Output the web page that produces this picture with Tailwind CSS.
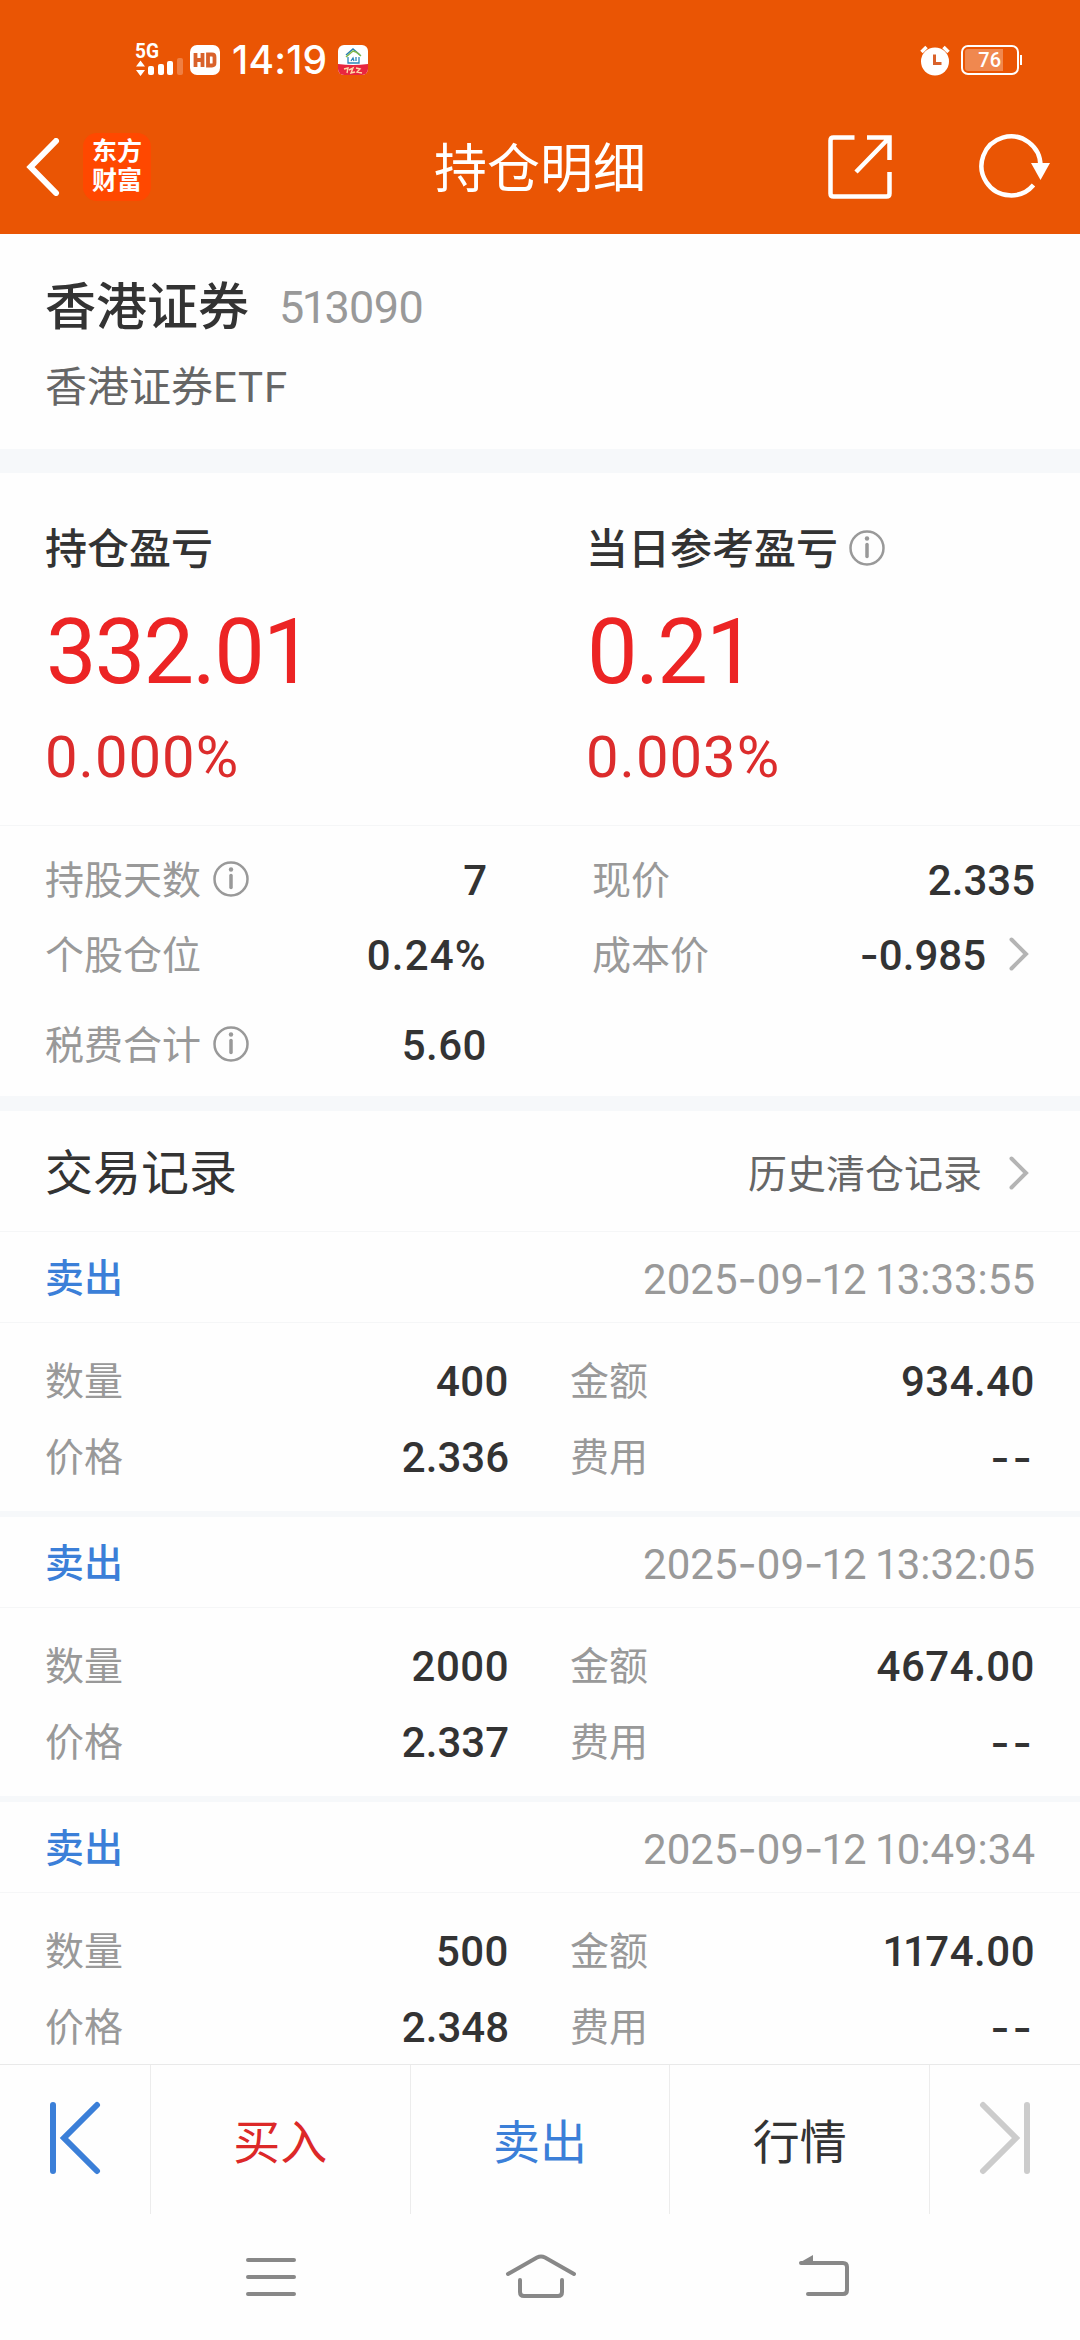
<!doctype html>
<html lang="zh-CN">
  <head>
    <meta charset="utf-8" />
    <meta name="viewport" content="width=device-width, initial-scale=1" />
    <script src="https://cdn.jsdelivr.net/npm/@tailwindcss/browser@4"></script>
    <title>持仓明细</title>
  </head>
  <body
    class="flex flex-col w-[1080px] h-[2340px] overflow-hidden bg-[#fefefe] text-[#333] font-[Roboto,'Noto_Sans_CJK_SC',sans-serif]"
  >
    <header class="h-[234px] shrink-0 bg-[#ea5504] text-white">
      <!-- status bar -->
      <div class="flex items-center h-[120px] pl-[135px] pr-[58px]">
        <svg class="w-[50px] h-[56px] overflow-visible" viewBox="0 -10 50 56" fill="currentColor">
          <text x="0" y="16" font-size="21" font-weight="700" textLength="24" lengthAdjust="spacingAndGlyphs">5G</text>
          <path d="M5.500 18.500l4.500 6h-9zM5.500 34l4.500-6h-9z" />
          <rect x="13" y="24" width="6" height="9" rx="2" />
          <rect x="23" y="22" width="6" height="11" rx="2" />
          <rect x="32" y="19" width="6" height="14" rx="2" />
          <rect x="42" y="16" width="6" height="17" rx="2" opacity="0.25" />
        </svg>
        <div class="flex items-center justify-center w-[30px] h-[30px] ml-[5px] rounded-[7px] bg-white">
          <svg class="w-[24px] h-[16px]" viewBox="0 0 24 16" fill="none" stroke="#d9622b" stroke-width="3.800">
            <path d="M2.500 1v14M9.500 1v14M2.500 8h7M15 2.500h4q2.500 0 2.500 2.500v6q0 2.500-2.500 2.500h-4z" />
          </svg>
        </div>
        <span class="ml-[12px] w-[97px] text-[39px] leading-[40px] tracking-[0.2px] font-medium font-[Inter,sans-serif]">14:19</span>
        <svg class="w-[30px] h-[30px] ml-[9px] rounded-[6px]" viewBox="0 0 30 30" fill="none">
          <path d="M0 0h30v30H0z" fill="#fff" />
          <path d="M0 19q15 2 30 0v11H0z" fill="#e8263f" />
          <path d="M8 10l7-6 7 6" stroke="#2b7fae" stroke-width="1.500" />
          <path d="M8 12l7-6 3 1 5 4" stroke="#7fb848" stroke-width="1.500" />
          <path d="M10 12v6h11v-6M13 16l2-3 1 3M18 12v4" stroke="#2b86b8" stroke-width="1.300" />
          <path d="M6 24l4-1-1 5M11 25l4-2-2 5 4-1M18 23l4 1-3 3 5 1" stroke="#ffd9a8" stroke-width="1.400" />
        </svg>
        <svg class="w-[32px] h-[32px] ml-auto mr-[10px]" viewBox="0 0 32 32">
          <circle cx="16" cy="17.500" r="14" fill="#fff" />
          <path d="M2.500 8l5-5M29.500 8l-5-5" stroke="#fff" stroke-width="3.500" />
          <path d="M15.500 10.500v9h7" fill="none" stroke="#d9622b" stroke-width="3" />
        </svg>
        <div class="flex items-center">
          <div class="flex items-center w-[58px] h-[30px] p-[2px] rounded-[7px] border-2 border-white">
            <div class="w-[38px] h-[22px] rounded-l-[3px] bg-white/30 text-right text-[20px] leading-[22px] font-medium pr-[2px]">76</div>
          </div>
          <div class="w-[2px] h-[10px] ml-[1px] bg-white"></div>
        </div>
      </div>
      <!-- title bar -->
      <div class="relative flex items-center h-[94px] pl-[26px] pr-[27px]">
        <svg class="w-[34px] h-[58px]" viewBox="0 0 34 58" fill="none" stroke="#fff" stroke-width="6">
          <path d="M30 3L4.500 29 30 55" stroke-linecap="round" />
        </svg>
        <div class="flex flex-col items-center justify-center w-[68px] h-[68px] ml-[23px] rounded-[14px] bg-[#ff4800] text-[25px] font-bold">
          <span class="h-[29px] leading-[27px]">东方</span>
          <span class="h-[29px] leading-[27px]">财富</span>
        </div>
        <h1 class="absolute inset-x-0 pt-[6px] text-center text-[53px] leading-[60px]">持仓明细</h1>
        <svg class="w-[64px] h-[64px] ml-auto" viewBox="0 0 64 64" fill="none" stroke="#fff" stroke-width="4.500">
          <path d="M26.500 2.500H5.500q-3 0-3 3v53q0 3 3 3h53q3 0 3-3V37M39 2.500h22.500V25M61 3L28 37" />
        </svg>
        <svg class="w-[74px] h-[66px] ml-[87px]" viewBox="0 0 74 66">
          <path d="M54.500 51A29.500 29.500 0 1 1 61.500 32" fill="none" stroke="#fff" stroke-width="4.500" />
          <path d="M52 29h19L61.500 46z" fill="#fff" />
        </svg>
      </div>
    </header>

    <main class="flex-1 min-h-0 overflow-hidden">
      <section class="h-[215px] pt-[41px] px-[45px]">
        <div class="flex items-center h-[66px]">
          <h2 class="text-[51px] leading-[60px] font-medium">香港证券</h2>
          <span class="ml-[30px] text-[45px] leading-[60px] tracking-[-0.6px] text-[#999]">5<span class="-mx-[2px]">1</span>3090</span>
        </div>
        <p class="flex items-center h-[60px] mt-[17px] text-[42px] leading-[50px] text-[#666]">香港证券<span class="tracking-[0.8px]">ETF</span></p>
      </section>
      <div class="h-[24px] bg-[#f6f8fa]"></div>

      <section class="flex h-[352px] pl-[45px] pt-[48px]">
        <div class="w-[541px]">
          <h3 class="flex items-center h-[58px] text-[42px] leading-[50px] font-medium">持仓盈亏</h3>
          <p class="h-[100px] mt-[24px] pl-[1px] text-[90px] leading-[100px] tracking-[-1.8px] text-[#ec2424]">332.01</p>
          <p class="h-[60px] mt-[24px] text-[58px] leading-[60px] tracking-[1px] text-[#dc2c2c]">0.000%</p>
        </div>
        <div>
          <h3 class="flex items-center h-[58px] text-[42px] leading-[50px] font-medium">
            当日参考盈亏
            <svg class="w-[36px] h-[36px] ml-[11px] -mt-[5px]" viewBox="0 0 36 36">
              <circle cx="18" cy="18" r="16.500" fill="none" stroke="#999" stroke-width="2.500" />
              <circle cx="18" cy="8.500" r="2.200" fill="#999" />
              <path d="M18 14.500v12" stroke="#999" stroke-width="3.500" stroke-linecap="round" />
            </svg>
          </h3>
          <p class="h-[100px] mt-[24px] pl-[1px] text-[90px] leading-[100px] tracking-[-2px] text-[#ec2424]">0.21</p>
          <p class="h-[60px] mt-[24px] text-[58px] leading-[60px] tracking-[1px] text-[#dc2c2c]">0.003%</p>
        </div>
      </section>

      <!-- position figures -->
      <section class="flex h-[271px] border-t border-[#f5f6f7] pt-[17px] pl-[45px] pr-[45px] text-[39px] leading-[50px]">
        <div class="w-[442px]">
          <div class="flex items-center h-[75px]">
            <span class="text-[#999]">持股天数</span>
            <svg class="w-[36px] h-[36px] ml-[12px] -mt-[4px]" viewBox="0 0 36 36">
              <circle cx="18" cy="18" r="16.500" fill="none" stroke="#999" stroke-width="2.500" />
              <circle cx="18" cy="8.500" r="2.200" fill="#999" />
              <path d="M18 14.500v12" stroke="#999" stroke-width="3.500" stroke-linecap="round" />
            </svg>
            <span class="ml-auto text-[42px] font-medium">7</span>
          </div>
          <div class="flex items-center h-[75px]">
            <span class="text-[#999]">个股仓位</span>
            <span class="ml-auto text-[42px] tracking-[1.2px] font-medium">0.24%</span>
          </div>
          <div class="flex items-center h-[75px] mt-[15px]">
            <span class="text-[#999]">税费合计</span>
            <svg class="w-[36px] h-[36px] ml-[12px] -mt-[4px]" viewBox="0 0 36 36">
              <circle cx="18" cy="18" r="16.500" fill="none" stroke="#999" stroke-width="2.500" />
              <circle cx="18" cy="8.500" r="2.200" fill="#999" />
              <path d="M18 14.500v12" stroke="#999" stroke-width="3.500" stroke-linecap="round" />
            </svg>
            <span class="ml-auto text-[42px] tracking-[0.5px] font-medium">5.60</span>
          </div>
        </div>
        <div class="flex-1 ml-[105px]">
          <div class="flex items-center h-[75px]">
            <span class="text-[#999]">现价</span>
            <span class="ml-auto text-[42px] font-medium">2.335</span>
          </div>
          <div class="flex items-center h-[75px]">
            <span class="text-[#999]">成本价</span>
            <span class="ml-auto text-[42px] font-medium"><span class="font-[Inter]">-</span>0.985</span>
            <svg class="w-[20px] h-[34px] ml-[23px] mr-[6px] -mt-[4px]" viewBox="0 0 20 34" fill="none" stroke="#b4b4b4" stroke-width="4">
              <path d="M2.500 2.500L17 17 2.500 31.500" stroke-linecap="round" />
            </svg>
          </div>
        </div>
      </section>
      <div class="h-[15px] bg-[#f6f8fa]"></div>

      <section>
        <div class="flex items-center h-[121px] pt-[5px] pl-[45px] pr-[51px] border-b border-[#f5f6f7]">
          <h3 class="text-[48px] leading-[60px]">交易记录</h3>
          <span class="ml-auto pt-[2px] text-[39px] leading-[50px] text-[#666]">历史清仓记录</span>
          <svg class="w-[20px] h-[34px] ml-[27px] -mt-px" viewBox="0 0 20 34" fill="none" stroke="#b4b4b4" stroke-width="4">
            <path d="M2.500 2.500L17 17 2.500 31.500" stroke-linecap="round" />
          </svg>
        </div>
        <div id="records">
          <!-- trade records go here -->
        </div>
      </section>
    </main>

    <footer class="shrink-0 h-[276px] bg-[#fefefe]">
      <div class="flex h-[150px] border-t border-[#e9e9e9] text-[47px] leading-[60px]">
        <a class="flex items-center justify-center w-[151px] border-r border-[#ececec]">
          <svg class="w-[52px] h-[74px] mb-[3px]" viewBox="0 0 52 74" fill="none" stroke="#3b7fd8" stroke-width="6" stroke-linecap="round">
            <path d="M4 4v66M48 4L15 37l33 33" />
          </svg>
        </a>
        <a class="flex items-center justify-center flex-1 border-r border-[#ececec] pt-[7px] text-[#dc2828]">买入</a>
        <a class="flex items-center justify-center flex-1 border-r border-[#ececec] pt-[7px] text-[#3b7fd8]">卖出</a>
        <a class="flex items-center justify-center flex-1 border-r border-[#ececec] pt-[7px]">行情</a>
        <a class="flex items-center justify-center w-[150px]">
          <svg class="w-[52px] h-[74px] mb-[3px]" viewBox="0 0 52 74" fill="none" stroke="#ccc" stroke-width="6" stroke-linecap="round">
            <path d="M48 4v66M4 4l33 33L4 70" />
          </svg>
        </a>
      </div>
      <!-- system navigation -->
      <div class="flex h-[126px] pt-[40px] pl-[246px]">
        <svg class="w-[50px] h-[46px]" viewBox="0 0 50 46" stroke="#888" stroke-width="4" stroke-linecap="round">
          <path d="M2 6h46M2 23h46M2 40h46" />
        </svg>
        <svg class="w-[72px] h-[46px] ml-[209px]" viewBox="0 0 72 46" fill="none" stroke="#888" stroke-width="4" stroke-linecap="round">
          <path d="M3 20L32 3.500q4-2 8 0L69 20M15 26v12q0 4 4 4h34q4 0 4-4V26" />
        </svg>
        <svg class="w-[52px] h-[46px] ml-[221px]" viewBox="0 0 52 46" fill="none" stroke="#888" stroke-width="4" stroke-linecap="round">
          <path d="M3 9h42q4 0 4 4v23q0 4-4 4H10" />
          <path d="M1 9L15 1v8z" fill="#888" stroke="none" />
        </svg>
      </div>
    </footer>

    <script>
      const records = [
        { time: "2025-09-12 13:33:55", count: "400", price: "2.336", amount: "934.40" },
        { time: "2025-09-12 13:32:05", count: "2000", price: "2.337", amount: "4674.00" },
        { time: "2025-09-12 10:49:34", count: "500", price: "2.348", amount: "1174.00" },
      ];

      // wider dashes and narrower ones
      function formatNumber(value) {
        return value.replace(/[-1]/g, (c) =>
          c === "-"
            ? `<span class="font-[Inter]">-</span>`
            : `<span class="-mx-[2px]">1</span>`,
        );
      }

      document.getElementById("records").innerHTML = records
        .map(
          (r) => `
          <article class="h-[285px] border-b-[6px] border-[#f6f8fa] text-[39px] leading-[50px]">
            <div class="flex items-center h-[91px] pl-[45px] pr-[45px] pt-[4px] border-b border-[#f5f6f7]">
              <span class="font-medium text-[#3b7fd8]">卖出</span>
              <span class="ml-auto text-[42px] text-[#999]">${formatNumber(r.time)}</span>
            </div>
            <div class="flex pt-[21px] pl-[45px] pr-[45px]">
              <div class="w-[464px]">
                <div class="flex items-center justify-between h-[76px]">
                  <span class="text-[#999]">数量</span>
                  <span class="text-[42px] tracking-[0.5px] font-medium">${r.count}</span>
                </div>
                <div class="flex items-center justify-between h-[76px]">
                  <span class="text-[#999]">价格</span>
                  <span class="text-[42px] font-medium">${r.price}</span>
                </div>
              </div>
              <div class="flex-1 ml-[61px]">
                <div class="flex items-center justify-between h-[76px]">
                  <span class="text-[#999]">金额</span>
                  <span class="text-[42px] tracking-[0.5px] font-medium">${formatNumber(r.amount)}</span>
                </div>
                <div class="flex items-center justify-between h-[76px]">
                  <span class="text-[#999]">费用</span>
                  <span class="text-[42px] tracking-[3px] font-medium">${formatNumber("--")}</span>
                </div>
              </div>
            </div>
          </article>`,
        )
        .join("");
    </script>
  </body>
</html>
